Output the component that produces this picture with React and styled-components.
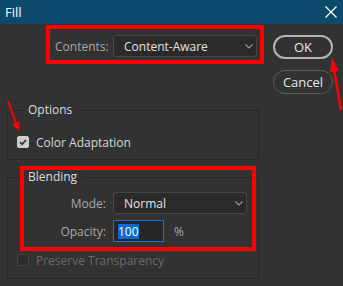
import React from 'react';
import styled, { createGlobalStyle } from 'styled-components';

const GlobalStyle = createGlobalStyle`
  html, body {
    margin: 0;
    background: #323232;
  }
  body {
    font-family: 'Open Sans', 'Noto Sans', sans-serif;
  }
`;

const Window = styled('div')`
  position: relative;
  width: 343px;
  height: 286px;
  background: #323232;
  color: #d8d8d8;
  font-size: 12px;
  overflow: hidden;
`;

const TitleBar = styled('div')`
  height: 24px;
  display: flex;
  align-items: center;
  justify-content: space-between;
  padding: 0 6px 0 5px;
  background: #0b4a6d;
  color: #fff;
  font-size: 13px;
`;

const Body = styled('div')`
  display: flex;
`;

const Main = styled('div')`
  width: 259px;
  padding: 5px 0 0 7px;
  box-sizing: border-box;
`;

const ContentsRow = styled('div')`
  display: flex;
  align-items: center;
  width: 210px;
  height: 31px;
  margin-left: 43px;
  padding: 6px 3px 3px 5px;
  box-sizing: border-box;
  outline: 4px solid #ff0000;
`;

const Label = styled('span')`
  color: #a9a9a9;
  text-align: ${(p) => (p.$right ? 'right' : 'left')};
`;

const Select = styled('div')`
  display: flex;
  align-items: center;
  justify-content: space-between;
  width: ${(p) => p.$width}px;
  height: 22px;
  margin-left: ${(p) => (p.$push ? 'auto' : '0')};
  padding: 0 3px 0 10px;
  box-sizing: border-box;
  background: #2a2a2a;
  border: 1px solid #454545;
  border-radius: 3px;
  color: #e2e2e2;
`;

const Buttons = styled('div')`
  display: flex;
  flex-direction: column;
  gap: 11px;
  padding-top: 11px;
  margin-left: 14px;
`;

const Button = styled('button')`
  width: 60px;
  height: 24px;
  padding: 0;
  background: transparent;
  border: ${(p) => (p.$primary ? '2px solid #b5b5b5' : '1.5px solid #5c5c5c')};
  border-radius: 12px;
  color: #e8e8e8;
  font-family: inherit;
  font-size: 13px;
`;

const Group = styled('fieldset')`
  margin: ${(p) => p.$top}px 0 0;
  padding: 0;
  min-width: 0;
  border: 1px solid #262626;
`;

const Legend = styled('legend')`
  margin-left: 15px;
  padding: 0 5px;
  line-height: 16px;
  color: #dcdcdc;
`;

const GroupBody = styled('div')`
  padding: ${(p) => p.$pad};
`;

const CheckRow = styled('label')`
  display: flex;
  align-items: center;
  gap: 7px;
  height: 16px;
  padding-left: ${(p) => p.$indent || 0}px;
  margin-top: ${(p) => p.$top || 0}px;
  color: ${(p) => (p.$disabled ? '#6a6a6a' : '#d8d8d8')};
`;

const Box = styled('span')`
  display: flex;
  align-items: center;
  justify-content: center;
  width: 12px;
  height: 12px;
  box-sizing: border-box;
  border-radius: 2px;
  background: ${(p) => (p.$checked ? '#cdcdcd' : '#2c2c2c')};
  border: 1px solid ${(p) => (p.$checked ? '#cdcdcd' : '#444')};
`;

const FieldGrid = styled('div')`
  display: grid;
  grid-template-columns: 98px auto;
  column-gap: 7px;
  row-gap: 6px;
  align-items: center;
  justify-items: start;
  & > ${Label} {
    justify-self: end;
  }
`;

const InputLine = styled('div')`
  display: flex;
  align-items: center;
`;

const NumberInput = styled('div')`
  display: flex;
  align-items: center;
  width: 51px;
  height: 22px;
  padding-left: 4px;
  box-sizing: border-box;
  background: #262626;
  border: 1px solid #1a6fd8;
`;

const Selected = styled('span')`
  background: #0b6bd3;
  color: #fff;
  line-height: 15px;
`;

const Unit = styled('span')`
  margin-left: 10px;
  color: #a9a9a9;
`;

const Mark = styled('div')`
  position: absolute;
  left: ${(p) => p.$x}px;
  top: ${(p) => p.$y}px;
  width: ${(p) => p.$w}px;
  height: ${(p) => p.$h}px;
  border: 4px solid #ff0000;
  box-sizing: border-box;
  pointer-events: none;
`;

const Arrows = styled('svg')`
  position: absolute;
  left: 0;
  top: 0;
  pointer-events: none;
`;

const Chevron = () => (
  <svg width="8" height="5" viewBox="0 0 8 5">
    <path d="M0.5 0.5 L4 4 L7.5 0.5" fill="none" stroke="#9a9a9a" strokeWidth="1.1" />
  </svg>
);

const Check = () => (
  <svg width="10" height="10" viewBox="0 0 10 10">
    <path d="M2 5.2 L4.1 7.3 L8 3" fill="none" stroke="#2f2f2f" strokeWidth="1.8" />
  </svg>
);

export default function App() {
  return (
    <Window>
      <GlobalStyle />
      <TitleBar>
        <span>Fill</span>
        <svg width="12" height="12" viewBox="0 0 12 12">
          <path d="M0.5 0.5 L11.5 11.5 M11.5 0.5 L0.5 11.5" stroke="#fff" strokeWidth="1.3" />
        </svg>
      </TitleBar>
      <Body>
        <Main>
          <ContentsRow>
            <Label>Contents:</Label>
            <Select $width={144} $push>
              <span>Content-Aware</span>
              <Chevron />
            </Select>
          </ContentsRow>

          <Group $top={42}>
            <Legend>Options</Legend>
            <GroupBody $pad="16px 0 9px 9px">
              <CheckRow>
                <Box $checked>
                  <Check />
                </Box>
                Color Adaptation
              </CheckRow>
            </GroupBody>
          </Group>

          <Group $top={9}>
            <Legend>Blending</Legend>
            <GroupBody $pad="7px 0 10px 0">
              <FieldGrid>
                <Label $right>Mode:</Label>
                <Select $width={134}>
                  <span>Normal</span>
                  <Chevron />
                </Select>
                <Label $right>Opacity:</Label>
                <InputLine>
                  <NumberInput>
                    <Selected>100</Selected>
                  </NumberInput>
                  <Unit>%</Unit>
                </InputLine>
              </FieldGrid>
              <CheckRow $indent={9} $top={10} $disabled>
                <Box />
                Preserve Transparency
              </CheckRow>
            </GroupBody>
          </Group>
        </Main>
        <Buttons>
          <Button $primary>OK</Button>
          <Button>Cancel</Button>
        </Buttons>
      </Body>

      <Mark $x={20} $y={166} $w={236} $h={85} />
      <Arrows width="343" height="286" viewBox="0 0 343 286">
        <line x1="8" y1="101" x2="16" y2="123" stroke="#ff0000" strokeWidth="2" />
        <polygon points="19,131 19.5,121.2 12.1,124" fill="#ff0000" />
        <line x1="341" y1="110" x2="334.4" y2="71.8" stroke="#ff0000" strokeWidth="2.5" />
        <polygon points="332,58 338.8,71 330,72.6" fill="#ff0000" />
      </Arrows>
    </Window>
  );
}
